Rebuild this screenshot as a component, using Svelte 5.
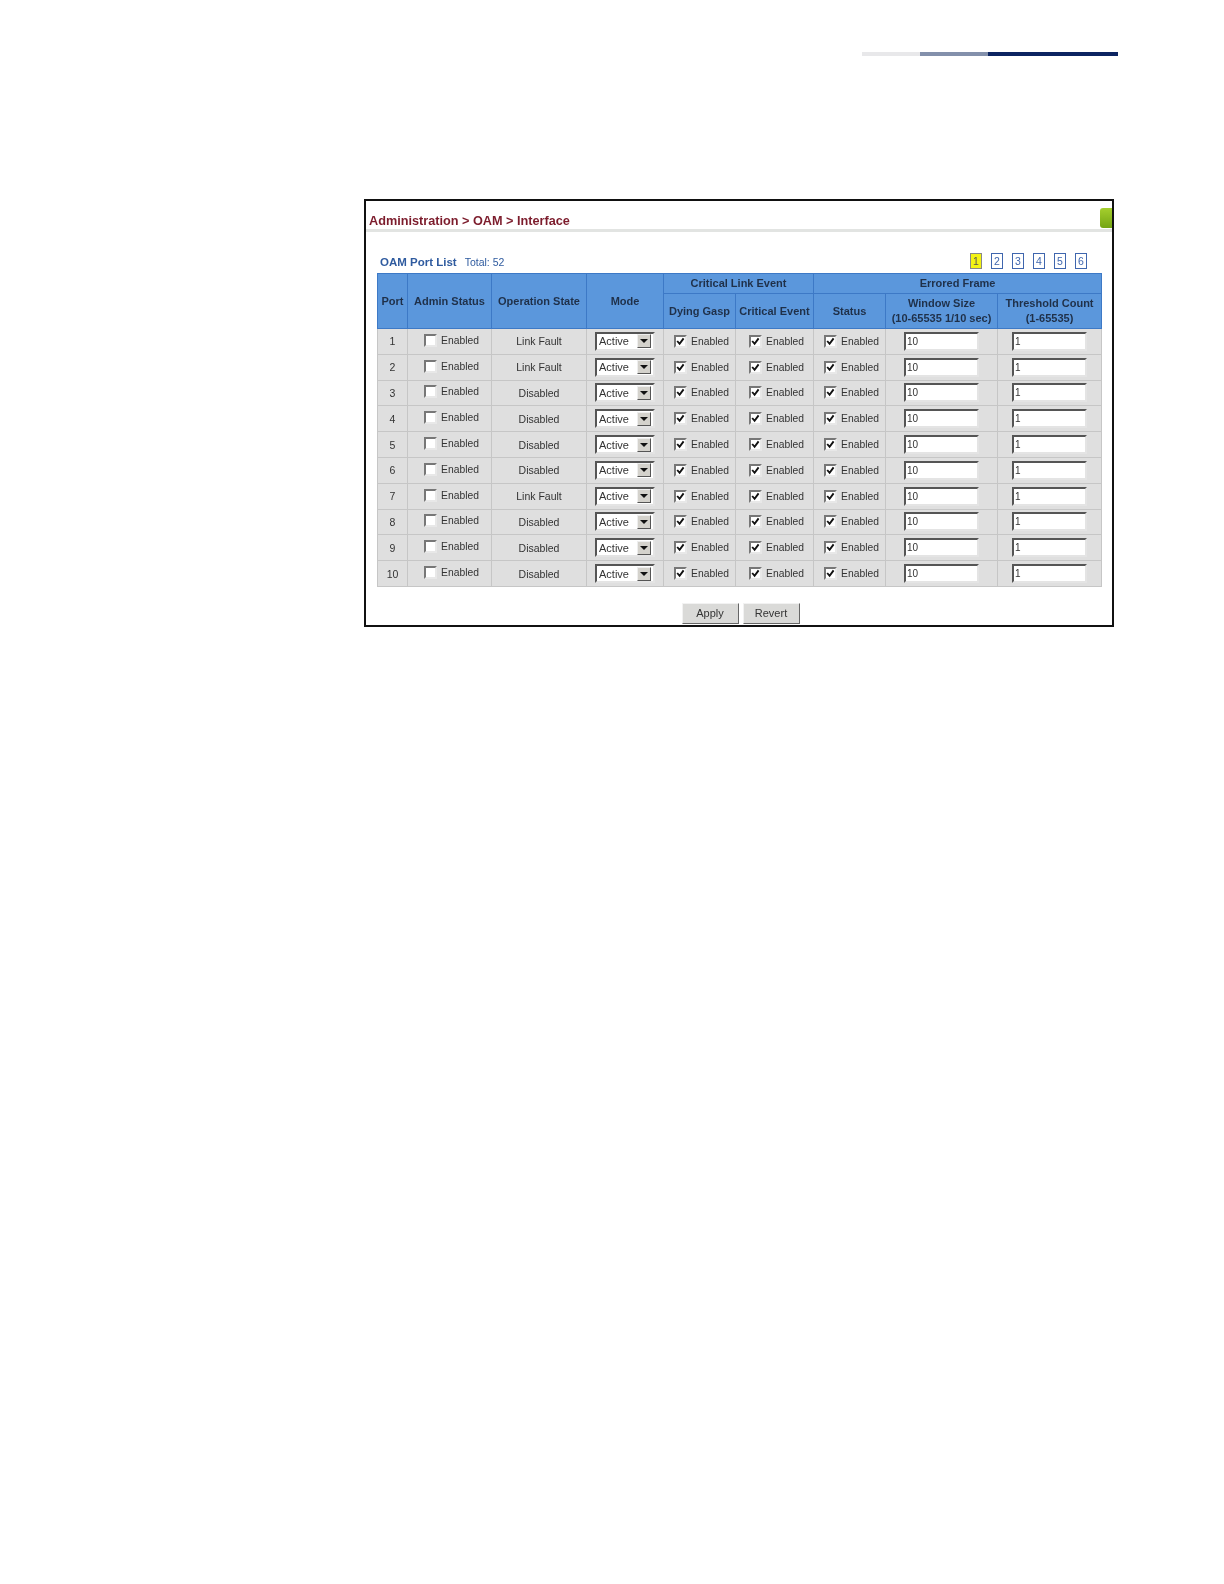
<script>
  const rows = [
    [1, 'Link Fault'], [2, 'Link Fault'], [3, 'Disabled'], [4, 'Disabled'], [5, 'Disabled'],
    [6, 'Disabled'], [7, 'Link Fault'], [8, 'Disabled'], [9, 'Disabled'], [10, 'Disabled']
  ];
  const pages = [1, 2, 3, 4, 5, 6];
</script>

{#snippet check(on)}
  <span class="chk">
    <span class="box">
      {#if on}
        <svg viewBox="0 0 9 9" width="9" height="9"><path d="M1.2 4 L3.6 6.8 L7.6 1.4" fill="none" stroke="#111" stroke-width="1.9" /></svg>
      {/if}
    </span>
    <span>Enabled</span>
  </span>
{/snippet}

<div class="page">
  <div class="rule">
    <span class="seg a"></span>
    <span class="seg b"></span>
    <span class="seg c"></span>
  </div>

  <div class="frame">
    <div class="title">
      <h1>Administration &gt; OAM &gt; Interface</h1>
      <span class="help"></span>
    </div>

    <div class="listhead">
      <div class="caption">
        <strong>OAM Port List</strong>
        <span>Total: 52</span>
      </div>
      <div class="pager">
        {#each pages as p}
          <span class="pg" class:cur={p === 1}>{p}</span>
        {/each}
      </div>
    </div>

    <table>
      <colgroup>
        <col style="width:30px" /><col style="width:84px" /><col style="width:95px" /><col style="width:77px" />
        <col style="width:72px" /><col style="width:78px" /><col style="width:72px" /><col style="width:112px" /><col style="width:104px" />
      </colgroup>
      <thead>
        <tr class="h1">
          <th rowspan="2">Port</th>
          <th rowspan="2">Admin Status</th>
          <th rowspan="2">Operation State</th>
          <th rowspan="2">Mode</th>
          <th colspan="2">Critical Link Event</th>
          <th colspan="3">Errored Frame</th>
        </tr>
        <tr class="h2">
          <th>Dying Gasp</th>
          <th>Critical Event</th>
          <th>Status</th>
          <th>Window Size<br />(10-65535 1/10 sec)</th>
          <th>Threshold Count<br />(1-65535)</th>
        </tr>
      </thead>
      <tbody>
        {#each rows as [port, state]}
          <tr>
            <td>{port}</td>
            <td>{@render check(false)}</td>
            <td>{state}</td>
            <td>
              <span class="select">
                <span>Active</span>
                <span class="arrow"><i></i></span>
              </span>
            </td>
            <td>{@render check(true)}</td>
            <td>{@render check(true)}</td>
            <td>{@render check(true)}</td>
            <td><input class="num" value="10" /></td>
            <td><input class="num" value="1" /></td>
          </tr>
        {/each}
      </tbody>
    </table>

    <div class="actions">
      <button>Apply</button>
      <button>Revert</button>
    </div>
  </div>
</div>

<style>
  :global(body) {
    background: #fff;
    font-family: "Liberation Sans", Arial, sans-serif;
  }

  .page {
    width: 1224px;
    height: 1584px;
    padding-top: 52px;
    box-sizing: border-box;
    overflow: hidden;
  }

  .rule {
    display: flex;
    height: 4px;
    margin-left: 862px;
    width: 256px;
  }
  .seg.a { width: 58px; background: #e8e8ea; }
  .seg.b { width: 68px; background: #8390ab; }
  .seg.c { width: 130px; background: #0c2461; }

  .frame {
    box-sizing: border-box;
    width: 750px;
    height: 428px;
    margin: 143px 0 0 364px;
    border: 2px solid #111;
    overflow: hidden;
    filter: blur(0.35px);
  }

  .title {
    display: flex;
    justify-content: space-between;
    height: 31px;
    padding-left: 3px;
    border-bottom: 3px solid #e2e4e2;
    box-sizing: border-box;
  }
  h1 {
    margin: 11px 0 0;
    font-size: 12.7px;
    line-height: 18px;
    font-weight: 700;
    color: #7c1c2c;
  }
  .help {
    width: 20px;
    height: 20px;
    margin: 7px -8px 0 0;
    border-radius: 3px;
    background: linear-gradient(#a5cf2d, #74a514);
  }

  .listhead {
    display: flex;
    justify-content: space-between;
    align-items: center;
    height: 41px;
    padding: 0 25px 0 14px;
    box-sizing: border-box;
  }
  .caption {
    padding-top: 18px;
    color: #2f5b9f;
    display: flex;
    align-items: baseline;
    gap: 8px;
    font-size: 10.5px;
  }
  .caption strong {
    font-size: 11.5px;
    font-weight: 700;
  }
  .pager {
    display: flex;
    gap: 9px;
    padding-top: 17px;
  }
  .pg {
    box-sizing: border-box;
    width: 12px;
    height: 16px;
    border: 1px solid #3f66ae;
    color: #3f66ae;
    font-size: 10.5px;
    line-height: 14px;
    text-align: center;
  }
  .pg.cur {
    background: #f3f314;
    border-color: #888;
    color: #555;
  }

  table {
    table-layout: fixed;
    width: 724px;
    margin-left: 11px;
    border-collapse: collapse;
    font-size: 10.5px;
    color: #333;
  }
  th {
    background: #5b97dc;
    border: 1px solid #3d79c6;
    color: #1f3049;
    font-size: 11px;
    line-height: 15px;
    padding: 0;
    font-weight: 700;
  }
  .h1 { height: 20px; }
  .h2 { height: 35px; }
  td {
    background: #dfdfdf;
    border: 1px solid #c6c6c6;
    text-align: center;
    padding: 0;
    box-sizing: border-box;
    height: 25.8px;
  }

  .chk {
    display: inline-flex;
    align-items: center;
    gap: 4px;
    position: relative;
    left: 2px;
    color: #333;
    font-size: 10.3px;
  }
  .box {
    box-sizing: border-box;
    width: 13px;
    height: 13px;
    background: #fff;
    border: 2px solid;
    border-color: #777 #e8e8e8 #e8e8e8 #777;
    display: flex;
    align-items: center;
    justify-content: center;
  }
  .box svg { flex: none; }

  .select {
    box-sizing: border-box;
    display: inline-flex;
    align-items: center;
    justify-content: space-between;
    width: 60px;
    height: 19px;
    padding: 0 2px 0 2px;
    background: #fff;
    border: 2px solid;
    border-color: #555 #e4e4e4 #e4e4e4 #555;
    vertical-align: middle;
    text-align: left;
    font-size: 11px;
  }
  .arrow {
    box-sizing: border-box;
    width: 14px;
    height: 14px;
    background: #d4d2cc;
    border: 1px solid;
    border-color: #eee #555 #555 #eee;
    display: flex;
    align-items: center;
    justify-content: center;
  }
  .arrow i {
    width: 0;
    height: 0;
    border: 4px solid transparent;
    border-top-color: #111;
    border-bottom: 0;
  }

  .num {
    box-sizing: border-box;
    display: inline-block;
    width: 75px;
    height: 19px;
    padding: 0 1px;
    margin: 0;
    border: 2px solid;
    border-color: #555 #e4e4e4 #e4e4e4 #555;
    background: #fff;
    color: #333;
    font: 10px "Liberation Sans", Arial, sans-serif;
    vertical-align: middle;
  }

  .actions {
    display: flex;
    justify-content: center;
    gap: 4px;
    margin-top: 16px;
    padding-left: 3px;
  }
  button {
    width: 57px;
    height: 21px;
    padding: 0;
    background: #dadad8;
    border: 1px solid;
    border-color: #f2f2f2 #666 #666 #f2f2f2;
    color: #333;
    font: 11px "Liberation Sans", Arial, sans-serif;
  }
</style>
